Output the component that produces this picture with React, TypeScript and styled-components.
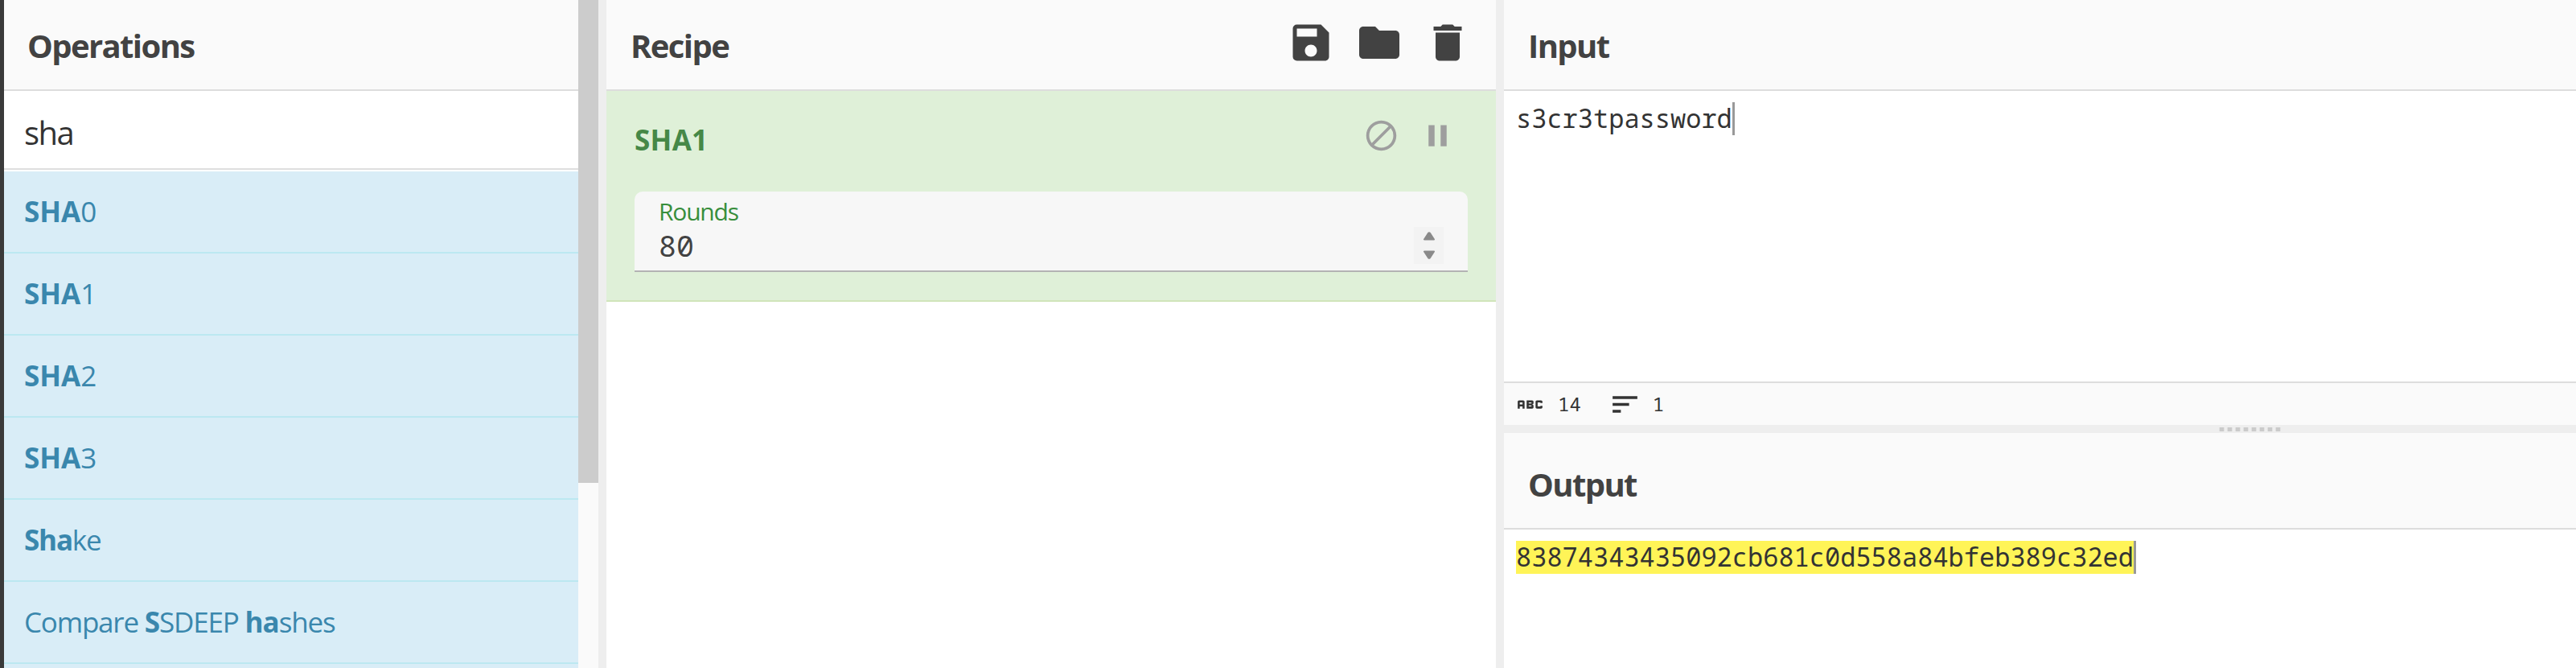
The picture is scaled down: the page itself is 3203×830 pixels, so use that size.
import React, { Fragment } from 'react';
import styled, { createGlobalStyle } from 'styled-components';
import { MdAbc, MdBlock, MdDelete, MdFolder, MdPause, MdSave, MdSort } from 'react-icons/md';

const sans = `"Open Sans", "Noto Sans", sans-serif`;
const mono = `"Noto Sans Mono", "DejaVu Sans Mono", monospace`;

const GlobalStyle = createGlobalStyle`
  *, *::before, *::after { box-sizing: border-box; }
  html, body { margin: 0; padding: 0; overflow: hidden; background: #fff; }
`;

const Workspace = styled.main`
  display: flex;
  width: 100vw;
  height: 100vh;
  overflow: hidden;
  font-family: ${sans};
  color: #424242;
`;

const WindowEdge = styled.div`
  flex: 0 0 5px;
  background: #3a3a3a;
`;

const Pane = styled.section<{ $width: number }>`
  flex: 0 0 ${p => p.$width}px;
  display: flex;
  flex-direction: column;
  height: 100%;
  background: #fff;
  overflow: hidden;
`;

const Gutter = styled.div`
  flex: 0 0 10px;
  background: #eee;
`;

const ResizeGutter = styled(Gutter)`
  display: flex;
  align-items: center;
  justify-content: center;
  gap: 5px;
  padding-top: 1px;
`;

const GripDot = styled.i`
  width: 5px;
  height: 5px;
  background: #cbcbcb;
  box-shadow: 1px 0 0 #e2e2e2, -1px 0 0 #e2e2e2;
`;

const PaneHeader = styled.header<{ $height?: number; $indent?: number }>`
  flex: none;
  display: flex;
  justify-content: space-between;
  height: ${p => p.$height ?? 113}px;
  padding: 0 30px 0 ${p => p.$indent ?? 30}px;
  background: #fafafa;
  border-bottom: 2px solid #ddd;
`;

const PaneTitle = styled.h1`
  align-self: flex-end;
  margin: 0;
  font-size: 40px;
  font-weight: 700;
  line-height: 108px;
  letter-spacing: -1.6px;
`;

const HeaderActions = styled.div`
  display: flex;
  align-items: flex-start;
  gap: 25px;
  padding-top: 22.5px;
`;

const IconButton = styled.button<{ $color?: string }>`
  display: flex;
  margin: 0;
  padding: 0;
  border: 0;
  background: none;
  color: ${p => p.$color ?? '#424242'};
`;

const OperationsArea = styled.div`
  display: flex;
  flex-direction: column;
  width: 714px;
  height: 100%;
`;

const OperationsSplit = styled.div`
  display: flex;
  height: 100%;
`;

const ScrollTrack = styled.div`
  flex: 0 0 25px;
  background: #fafafa;
`;

const ScrollThumb = styled.div`
  height: 600px;
  background: #ccc;
`;

const Search = styled.input`
  flex: none;
  display: block;
  width: 100%;
  height: 98px;
  margin: 0 0 2px;
  padding: 6px 25px 0;
  border: 0;
  border-bottom: 2px solid #dfdfdf;
  outline: 0;
  background: #fff;
  color: #333;
  font-family: ${sans};
  font-size: 40px;
  letter-spacing: -1.5px;
`;

const OperationList = styled.ul`
  margin: 0;
  padding: 0;
  list-style: none;
`;

const OperationItem = styled.li`
  height: 102px;
  padding-left: 25px;
  background: #d9edf7;
  border-bottom: 2px solid #bce8f1;
  color: #3a87ad;
  font-size: 35px;
  line-height: 100px;
  letter-spacing: -1.2px;
  white-space: pre;
`;

const Match = styled.b<{ $spacing: number }>`
  font-weight: 700;
  letter-spacing: ${p => p.$spacing}px;
`;

const RecipeOperation = styled.article`
  height: 262px;
  padding: 0 35px;
  background: #dff0d8;
  border-bottom: 2px solid #d0e5ba;
`;

const OperationHead = styled.div`
  display: flex;
  justify-content: space-between;
  height: 125px;
  padding-right: 15px;
`;

const OperationName = styled.h2`
  margin: 0;
  color: #468847;
  font-size: 35px;
  font-weight: 700;
  line-height: 121px;
  letter-spacing: 0.3px;
`;

const OperationActions = styled.div`
  display: flex;
  align-items: flex-start;
  gap: 25px;
  padding-top: 33px;
`;

const Argument = styled.label`
  display: flex;
  justify-content: space-between;
  height: 100px;
  padding: 0 30px;
  border-radius: 10px 10px 0 0;
  border-bottom: 2px solid #b3b3b3;
  background: #f7f7f7;
`;

const ArgumentText = styled.div`
  display: flex;
  flex-direction: column;
`;

const ArgumentLabel = styled.span`
  color: #388e3c;
  font-size: 30px;
  line-height: 50px;
  letter-spacing: -1.2px;
`;

const ArgumentValue = styled.span`
  font-family: ${mono};
  font-size: 36.6px;
  line-height: 34px;
`;

const Stepper = styled.div`
  display: flex;
  flex-direction: column;
  align-items: center;
  justify-content: space-between;
  width: 37px;
  height: 46px;
  margin-top: 44px;
  padding: 6px 0;
  background: #f3f3f3;
`;

const Editor = styled.div<{ $height?: number }>`
  flex: ${p => (p.$height ? `0 0 ${p.$height}px` : '1')};
  display: flex;
  align-items: flex-start;
  padding: 14px 15px;
  background: #fff;
`;

const EditorLine = styled.span<{ $marked?: boolean }>`
  display: block;
  height: 41px;
  background: ${p => (p.$marked ? '#fff457' : 'transparent')};
  color: #333;
  font-family: ${mono};
  font-size: 32px;
  line-height: 39px;
`;

const Caret = styled.i`
  width: 3px;
  height: 41px;
  background: #999;
`;

const StatusBar = styled.footer`
  flex: 0 0 54px;
  display: flex;
  align-items: center;
  gap: 34px;
  padding-left: 12px;
  border-top: 2px solid #ddd;
  background: #fafafa;
  color: #333;
`;

const Stat = styled.span`
  display: flex;
  align-items: center;
  gap: 14px;
  height: 52px;
  font-family: ${mono};
  font-size: 24px;
  line-height: 52px;
`;

type Part = [text: string, spacing?: number];

const operations: Part[][] = [
  [['SHA', 0], ['0']],
  [['SHA', 0], ['1']],
  [['SHA', 0], ['2']],
  [['SHA', 0], ['3']],
  [['Sha', -1.2], ['ke']],
  [['Compare '], ['S', -1], ['SDEEP '], ['ha', -1], ['shes']],
  [['']],
];

const Triangle = ({ down }: { down?: boolean }) => (
  <svg width="16" height="11" viewBox="0 0 16 11">
    <path
      d={down ? 'M2 1.5h12L9 9.3q-1 1-2 0z' : 'M2 9.5h12L9 1.7q-1-1-2 0z'}
      fill="#8a8a8a"
      stroke="#8a8a8a"
      strokeWidth="2"
      strokeLinejoin="round"
    />
  </svg>
);

export default function App() {
  return (
    <Workspace>
      <GlobalStyle />
      <WindowEdge />
      <Pane $width={739}>
        <OperationsSplit>
          <OperationsArea>
            <PaneHeader $indent={29}>
              <PaneTitle>Operations</PaneTitle>
            </PaneHeader>
            <Search defaultValue="sha" />
            <OperationList>
              {operations.map((parts, row) => (
                <OperationItem key={row}>
                  {parts.map(([text, spacing], i) =>
                    spacing === undefined ? (
                      <Fragment key={i}>{text}</Fragment>
                    ) : (
                      <Match key={i} $spacing={spacing}>{text}</Match>
                    ),
                  )}
                </OperationItem>
              ))}
            </OperationList>
          </OperationsArea>
          <ScrollTrack>
            <ScrollThumb />
          </ScrollTrack>
        </OperationsSplit>
      </Pane>
      <Gutter />
      <Pane $width={1106}>
        <PaneHeader>
          <PaneTitle>Recipe</PaneTitle>
          <HeaderActions>
            <IconButton><MdSave size={60} /></IconButton>
            <IconButton><MdFolder size={60} /></IconButton>
            <IconButton><MdDelete size={60} /></IconButton>
          </HeaderActions>
        </PaneHeader>
        <RecipeOperation>
          <OperationHead>
            <OperationName>SHA1</OperationName>
            <OperationActions>
              <IconButton $color="#9e9e9e"><MdBlock size={45} /></IconButton>
              <IconButton $color="#9e9e9e"><MdPause size={45} /></IconButton>
            </OperationActions>
          </OperationHead>
          <Argument>
            <ArgumentText>
              <ArgumentLabel>Rounds</ArgumentLabel>
              <ArgumentValue>80</ArgumentValue>
            </ArgumentText>
            <Stepper>
              <Triangle />
              <Triangle down />
            </Stepper>
          </Argument>
        </RecipeOperation>
      </Pane>
      <Gutter />
      <Pane $width={1855}>
        <PaneHeader>
          <PaneTitle>Input</PaneTitle>
        </PaneHeader>
        <Editor $height={361}>
          <EditorLine>s3cr3tpassword</EditorLine>
          <Caret />
        </Editor>
        <StatusBar>
          <Stat><MdAbc size={41} />14</Stat>
          <Stat><MdSort size={41} />1</Stat>
        </StatusBar>
        <ResizeGutter>
          {Array.from({ length: 8 }, (_, i) => <GripDot key={i} />)}
        </ResizeGutter>
        <PaneHeader $height={120}>
          <PaneTitle>Output</PaneTitle>
        </PaneHeader>
        <Editor>
          <EditorLine $marked>83874343435092cb681c0d558a84bfeb389c32ed</EditorLine>
          <Caret />
        </Editor>
      </Pane>
    </Workspace>
  );
}
